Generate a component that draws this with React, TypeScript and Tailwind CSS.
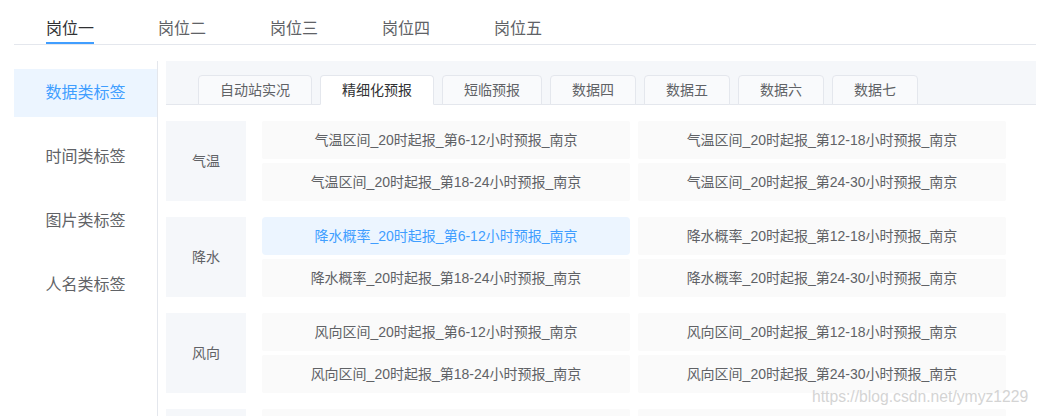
import React from "react";

const topTabs = ["岗位一", "岗位二", "岗位三", "岗位四", "岗位五"];
const sideItems = ["数据类标签", "时间类标签", "图片类标签", "人名类标签"];
const subTabs = ["自动站实况", "精细化预报", "短临预报", "数据四", "数据五", "数据六", "数据七"];

const groups = [
  { name: "气温", prefix: "气温区间" },
  { name: "降水", prefix: "降水概率" },
  { name: "风向", prefix: "风向区间" },
  { name: "", prefix: "" },
];
const ranges = ["6-12", "12-18", "18-24", "24-30"];

export default function App() {
  return (
    <div className="relative w-[1038px] h-[416px] overflow-hidden bg-white font-['Liberation_Sans','Noto_Sans_CJK_SC',sans-serif] pl-[14px] pr-[2px]">
      {/* Top tabs */}
      <div className="flex gap-[64px] pl-[32px] pt-[14px] border-b border-[#e4e7ed]">
        {topTabs.map((t, i) => (
          <div
            key={t}
            className={
              "relative h-[30px] leading-[30px] text-[16px] " +
              (i === 0 ? "text-[#303133]" : "text-[#606266]")
            }
          >
            {t}
            {i === 0 && <div className="absolute left-0 right-0 bottom-0 h-[2px] bg-[#409eff]" />}
          </div>
        ))}
      </div>

      <div className="flex mt-[16px]">
        {/* Sidebar */}
        <div className="w-[144px] shrink-0 border-r border-[#e4e7ed] pt-[8px] flex flex-col gap-[16px] min-h-[400px]">
          {sideItems.map((s, i) => (
            <div
              key={s}
              className={
                "h-[48px] leading-[48px] text-[16px] text-center " +
                (i === 0 ? "bg-[#ecf5ff] text-[#409eff]" : "text-[#606266]")
              }
            >
              {s}
            </div>
          ))}
        </div>

        {/* Right panel */}
        <div className="flex-1 ml-[8px]">
          <div className="flex items-end gap-[8px] h-[44px] pl-[32px] bg-[#f5f7fa] border-b border-[#e4e7ed]">
            {subTabs.map((t, i) => (
              <div
                key={t}
                className={
                  "h-[30px] -mb-px px-[21px] leading-[28px] text-[14px] rounded-t-[4px] border " +
                  (i === 1
                    ? "bg-white border-[#e4e7ed] border-b-white text-[#303133]"
                    : "bg-[#f9fafc] border-[#e4e7ed] text-[#606266]")
                }
              >
                {t}
              </div>
            ))}
          </div>

          <div className="flex flex-col gap-[16px] pt-[16px]">
            {groups.map((g, gi) => (
              <div key={gi} className="flex gap-[16px]">
                <div className="w-[80px] h-[80px] shrink-0 bg-[#f5f7fa] text-[14px] text-[#606266] flex items-center justify-center">
                  {g.name}
                </div>
                <div className="grid grid-cols-[368px_368px] gap-x-[8px] gap-y-[4px]">
                  {ranges.map((r, ri) => {
                    const active = gi === 1 && ri === 0;
                    return (
                      <div
                        key={r}
                        className={
                          "h-[38px] leading-[38px] text-center text-[14px] " +
                          (active
                            ? "bg-[#ecf5ff] text-[#409eff] rounded-[4px]"
                            : "bg-[#fafafa] text-[#606266] rounded-[2px]")
                        }
                      >
                        {g.prefix ? `${g.prefix}_20时起报_第${r}小时预报_南京` : ""}
                      </div>
                    );
                  })}
                </div>
              </div>
            ))}
          </div>
        </div>
      </div>

      <div className="absolute left-[812px] top-[387px] text-[15.7px] leading-[20px] text-[#d4d4d4] font-['Liberation_Sans',sans-serif]">
        https://blog.csdn.net/ymyz1229
      </div>
    </div>
  );
}
